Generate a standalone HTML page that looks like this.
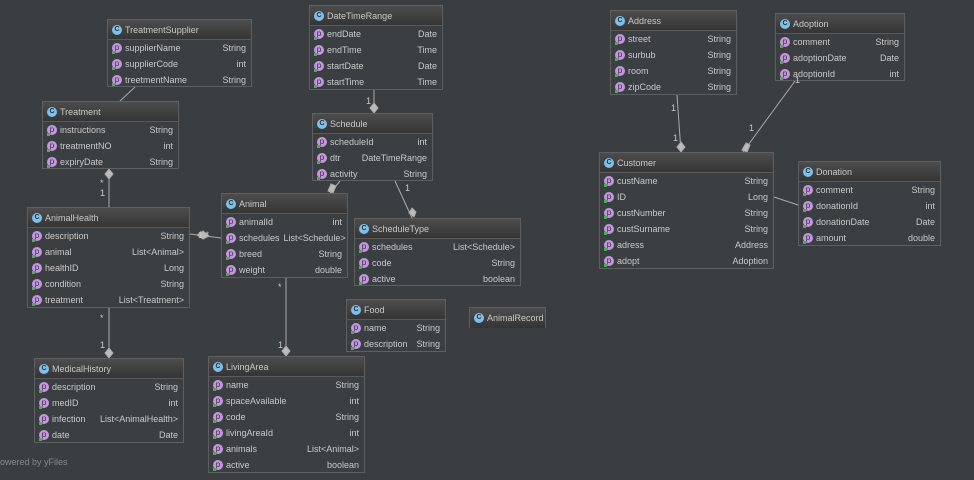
<!DOCTYPE html><html><head><style>
body{margin:0;width:974px;height:480px;background:#3b3e41;font-family:"Liberation Sans","DejaVu Sans",sans-serif;font-size:9px;color:#c9c9c9;position:relative;overflow:hidden}
.b{position:absolute;border:1px solid #5e5f61;background:#3c3f42;box-sizing:border-box}
.h{height:20px;line-height:20px;background:linear-gradient(#4d4d4d,#353535);border-bottom:1px solid #5a5a5a;padding-left:17px;position:relative;box-sizing:border-box}
.h:before{content:"C";position:absolute;left:4px;top:5px;width:10px;height:10px;border-radius:50%;background:#7fc0e8;color:#234;font-size:7px;line-height:10px;text-align:center;font-weight:bold}
.r{height:16px;line-height:17px;padding-left:17px;padding-right:5px;position:relative;display:flex;justify-content:space-between}
.r span+span{margin-left:4px}
.r:before{content:"p";position:absolute;left:4px;top:3px;width:10px;height:10px;border-radius:50%;background:#c596e0;color:#333;font-size:8px;line-height:9px;text-align:center}
.r:after{content:"";position:absolute;left:4px;top:11px;width:3px;height:3px;background:#4caf50}
svg{position:absolute;left:0;top:0}
.n{position:absolute}
</style></head><body>
<svg width="974" height="480" stroke="#aaa" fill="none" stroke-width="1">
<line x1="135" y1="87" x2="120" y2="101"/>
<line x1="109" y1="169" x2="109" y2="207"/><polygon points="109,169 105,174 109,179 113,174" fill="#bbb"/>
<line x1="109" y1="308" x2="109" y2="358"/><polygon points="109,348 105,353 109,358 113,353" fill="#bbb"/>
<line x1="374" y1="90" x2="374" y2="113"/><polygon points="374,103 370,108 374,113 378,108" fill="#bbb"/>
<line x1="190" y1="234" x2="221" y2="238"/><polygon points="197,235 203,231 209,236 203,239" fill="#bbb"/>
<line x1="340" y1="181" x2="330" y2="193"/><polygon points="331,184 336,186 333,193 328,191" fill="#bbb"/>
<line x1="395" y1="181" x2="412" y2="218"/><polygon points="412,208 416,212 414,217 409,213" fill="#bbb"/>
<line x1="286" y1="278" x2="286" y2="356"/><polygon points="286,346 282,351 286,356 290,351" fill="#bbb"/>
<line x1="677" y1="95" x2="681" y2="152"/><polygon points="681,142 677,147 681,152 685,147" fill="#bbb"/>
<line x1="795" y1="81" x2="743" y2="152"/><polygon points="746,143 750,145 747,152 742,150" fill="#bbb"/>
<line x1="774" y1="197" x2="798" y2="205"/>
</svg>
<div class="b" style="left:107px;top:19px;width:145px;height:68px"><div class="h">TreatmentSupplier</div><div class="r"><span>supplierName</span><span>String</span></div><div class="r"><span>supplierCode</span><span>int</span></div><div class="r"><span>treetmentName</span><span>String</span></div></div>
<div class="b" style="left:42px;top:101px;width:137px;height:68px"><div class="h">Treatment</div><div class="r"><span>instructions</span><span>String</span></div><div class="r"><span>treatmentNO</span><span>int</span></div><div class="r"><span>expiryDate</span><span>String</span></div></div>
<div class="b" style="left:309px;top:5px;width:134px;height:85px"><div class="h">DateTimeRange</div><div class="r"><span>endDate</span><span>Date</span></div><div class="r"><span>endTime</span><span>Time</span></div><div class="r"><span>startDate</span><span>Date</span></div><div class="r"><span>startTime</span><span>Time</span></div></div>
<div class="b" style="left:312px;top:113px;width:121px;height:68px"><div class="h">Schedule</div><div class="r"><span>scheduleId</span><span>int</span></div><div class="r"><span>dtr</span><span>DateTimeRange</span></div><div class="r"><span>activity</span><span>String</span></div></div>
<div class="b" style="left:610px;top:10px;width:127px;height:85px"><div class="h">Address</div><div class="r"><span>street</span><span>String</span></div><div class="r"><span>surbub</span><span>String</span></div><div class="r"><span>room</span><span>String</span></div><div class="r"><span>zipCode</span><span>String</span></div></div>
<div class="b" style="left:775px;top:13px;width:130px;height:68px"><div class="h">Adoption</div><div class="r"><span>comment</span><span>String</span></div><div class="r"><span>adoptionDate</span><span>Date</span></div><div class="r"><span>adoptionId</span><span>int</span></div></div>
<div class="b" style="left:599px;top:152px;width:175px;height:117px"><div class="h">Customer</div><div class="r"><span>custName</span><span>String</span></div><div class="r"><span>ID</span><span>Long</span></div><div class="r"><span>custNumber</span><span>String</span></div><div class="r"><span>custSurname</span><span>String</span></div><div class="r"><span>adress</span><span>Address</span></div><div class="r"><span>adopt</span><span>Adoption</span></div></div>
<div class="b" style="left:798px;top:161px;width:143px;height:85px"><div class="h">Donation</div><div class="r"><span>comment</span><span>String</span></div><div class="r"><span>donationId</span><span>int</span></div><div class="r"><span>donationDate</span><span>Date</span></div><div class="r"><span>amount</span><span>double</span></div></div>
<div class="b" style="left:27px;top:207px;width:163px;height:101px"><div class="h">AnimalHealth</div><div class="r"><span>description</span><span>String</span></div><div class="r"><span>animal</span><span>List&lt;Animal&gt;</span></div><div class="r"><span>healthID</span><span>Long</span></div><div class="r"><span>condition</span><span>String</span></div><div class="r"><span>treatment</span><span>List&lt;Treatment&gt;</span></div></div>
<div class="b" style="left:221px;top:193px;width:127px;height:85px"><div class="h">Animal</div><div class="r"><span>animalId</span><span>int</span></div><div class="r"><span>schedules</span><span>List&lt;Schedule&gt;</span></div><div class="r"><span>breed</span><span>String</span></div><div class="r"><span>weight</span><span>double</span></div></div>
<div class="b" style="left:354px;top:218px;width:167px;height:68px"><div class="h">ScheduleType</div><div class="r"><span>schedules</span><span>List&lt;Schedule&gt;</span></div><div class="r"><span>code</span><span>String</span></div><div class="r"><span>active</span><span>boolean</span></div></div>
<div class="b" style="left:346px;top:299px;width:100px;height:53px"><div class="h">Food</div><div class="r"><span>name</span><span>String</span></div><div class="r"><span>description</span><span>String</span></div></div>
<div class="b" style="left:469px;top:307px;width:77px;height:21px"><div class="h" style="border:0">AnimalRecord</div></div>
<div class="b" style="left:34px;top:358px;width:150px;height:85px"><div class="h">MedicalHistory</div><div class="r"><span>description</span><span>String</span></div><div class="r"><span>medID</span><span>int</span></div><div class="r"><span>infection</span><span>List&lt;AnimalHealth&gt;</span></div><div class="r"><span>date</span><span>Date</span></div></div>
<div class="b" style="left:208px;top:356px;width:157px;height:117px"><div class="h">LivingArea</div><div class="r"><span>name</span><span>String</span></div><div class="r"><span>spaceAvailable</span><span>int</span></div><div class="r"><span>code</span><span>String</span></div><div class="r"><span>livingAreaId</span><span>int</span></div><div class="r"><span>animals</span><span>List&lt;Animal&gt;</span></div><div class="r"><span>active</span><span>boolean</span></div></div>
<div class="n" style="left:0;top:457px;color:#888">owered by yFiles</div>
<div class="n" style="left:100px;top:178px">*</div><div class="n" style="left:100px;top:188px">1</div>
<div class="n" style="left:100px;top:313px">*</div><div class="n" style="left:100px;top:340px">1</div>
<div class="n" style="left:198px;top:230px">1 *</div>
<div class="n" style="left:366px;top:96px">1</div>
<div class="n" style="left:405px;top:183px">1</div>
<div class="n" style="left:278px;top:340px">1</div><div class="n" style="left:278px;top:282px">*</div>
<div class="n" style="left:671px;top:103px">1</div><div class="n" style="left:673px;top:133px">1</div>
<div class="n" style="left:749px;top:123px">1</div><div class="n" style="left:795px;top:75px">1</div>
</body></html>
